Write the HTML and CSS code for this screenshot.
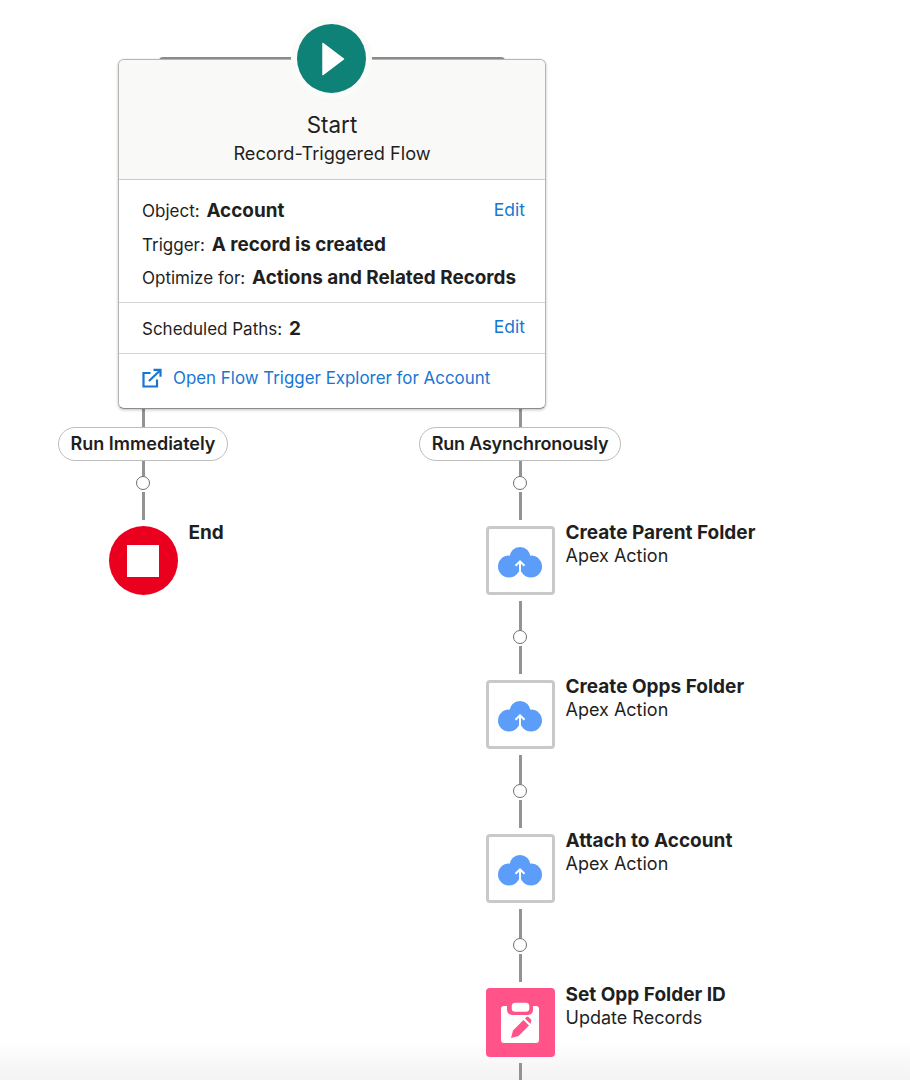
FILE: index.html

```html
<!DOCTYPE html>
<html lang="en">
<head>
    <meta charset="UTF-8">
    <meta name="viewport" content="width=device-width, initial-scale=1.0">
    <title>Record-Triggered Flow</title>
    <link rel="stylesheet" href="styles.css">
</head>
<body>
    <svg class="sprites" width="0" height="0">
        <symbol id="cloud-icon" viewBox="0 0 44 31">
            <circle cx="22" cy="10.5" r="10.5" fill="#5c9dfa"/>
            <circle cx="11" cy="19.5" r="11" fill="#5c9dfa"/>
            <circle cx="33" cy="19.5" r="11" fill="#5c9dfa"/>
            <path d="M22 30V14.5M17.5 18.8L22 14.3l4.5 4.5" fill="none" stroke="#fff" stroke-width="2"/>
        </symbol>
    </svg>

    <div class="canvas">
        <div class="card">
            <div class="top-line"></div>
            <div class="start-icon">
                <svg width="24" height="34" viewBox="0 0 24 34"><path d="M2 1.5L22.5 17 2 32.5z" fill="#fff" stroke="#fff" stroke-width="1.5" stroke-linejoin="round"/></svg>
            </div>
            <div class="card-head">
                <div class="card-title">Start</div>
                <div class="card-sub">Record-Triggered Flow</div>
            </div>
            <div class="card-section props">
                <div class="prop"><span>Object:</span> <b>Account</b><a class="edit">Edit</a></div>
                <div class="prop"><span>Trigger:</span> <b>A record is created</b></div>
                <div class="prop"><span>Optimize for:</span> <b>Actions and Related Records</b></div>
            </div>
            <div class="card-section paths">
                <div class="prop"><span>Scheduled Paths:</span> <b>2</b><a class="edit">Edit</a></div>
            </div>
            <div class="card-section explorer">
                <svg width="20" height="20" viewBox="0 0 20 20" fill="none" stroke="#1776d2" stroke-width="2.2"><path d="M8.5 5H1.5v13.5h13.5V11.5"/><path d="M7 13L18 2.5M11.5 1.8h7v7"/></svg>
                <a>Open Flow Trigger Explorer for Account</a>
            </div>
        </div>

        <div class="branches">
            <div class="branch">
                <div class="line to-pill"></div>
                <div class="pill">Run Immediately</div>
                <div class="line to-dot"></div>
                <div class="dot"></div>
                <div class="line to-node"></div>
                <div class="node">
                    <div class="end-icon"><div class="end-square"></div></div>
                    <div class="node-label"><b>End</b></div>
                </div>
            </div>

            <div class="branch">
                <div class="line to-pill"></div>
                <div class="pill pill-async">Run Asynchronously</div>
                <div class="line to-dot"></div>
                <div class="dot"></div>
                <div class="line to-node"></div>
                <div class="node">
                    <div class="action-icon"><svg width="44" height="31"><use href="#cloud-icon"/></svg></div>
                    <div class="node-label"><b>Create Parent Folder</b><span>Apex Action</span></div>
                </div>
                <div class="line after-node"></div>
                <div class="dot"></div>
                <div class="line to-node"></div>
                <div class="node">
                    <div class="action-icon"><svg width="44" height="31"><use href="#cloud-icon"/></svg></div>
                    <div class="node-label"><b>Create Opps Folder</b><span>Apex Action</span></div>
                </div>
                <div class="line after-node"></div>
                <div class="dot"></div>
                <div class="line to-node"></div>
                <div class="node">
                    <div class="action-icon"><svg width="44" height="31"><use href="#cloud-icon"/></svg></div>
                    <div class="node-label"><b>Attach to Account</b><span>Apex Action</span></div>
                </div>
                <div class="line after-node"></div>
                <div class="dot"></div>
                <div class="line to-node"></div>
                <div class="node">
                    <div class="update-icon">
                        <svg width="69" height="69" viewBox="0 0 69 69">
                            <rect x="15" y="18" width="38" height="37" rx="3" fill="#fff"/>
                            <rect x="21" y="12" width="26" height="15" rx="5" fill="#ff538a"/>
                            <rect x="25.7" y="14.7" width="17.6" height="9" rx="3.5" fill="#fff"/>
                            <path d="M25 50l2-7.5L37.5 32l5.5 5.5L32.5 48z" fill="#ff538a"/>
                            <path d="M39 30.5l1.5-1.5a1.5 1.5 0 0 1 2 0l2.5 2.5a1.5 1.5 0 0 1 0 2L44.5 36z" fill="#ff538a"/>
                        </svg>
                    </div>
                    <div class="node-label"><b>Set Opp Folder ID</b><span>Update Records</span></div>
                </div>
                <div class="line after-node"></div>
            </div>
        </div>
        <div class="bottom-fade"></div>
    </div>
</body>
</html>
```

FILE: styles.css

```css
body {
    margin: 0;
    background-color: #fff;
    font-family: Inter, "Liberation Sans", sans-serif;
    color: #1f1f1f;
}
.sprites {
    position: absolute;
}
.canvas {
    position: relative;
    height: 1080px;
    padding-top: 59px;
    box-sizing: border-box;
    overflow: hidden;
}

/* start card */
.card {
    position: relative;
    box-sizing: border-box;
    width: 428px;
    height: 350px;
    margin-left: 118px;
    background-color: #fff;
    border: 1px solid #b5b5b5;
    border-bottom-color: #8c8c8c;
    border-radius: 6px;
    box-shadow: 0 1px 3px rgba(0, 0, 0, 0.25);
}
.top-line {
    position: absolute;
    z-index: -1;
    top: -3px;
    left: 40px;
    width: 346px;
    height: 6px;
    border-radius: 4px 4px 0 0;
    background-color: #8e8e8e;
}
.start-icon {
    position: absolute;
    top: -36px;
    left: 178px;
    width: 69px;
    height: 69px;
    display: flex;
    align-items: center;
    justify-content: center;
    border-radius: 50%;
    background-color: #0f8278;
    box-shadow: 0 0 0 6px #fbfbfa;
}
.start-icon svg {
    margin-left: 2px;
}
.card-head {
    box-sizing: border-box;
    height: 120px;
    padding-top: 51px;
    text-align: center;
    background-color: #f9f9f8;
    border-bottom: 1px solid #c9c9c9;
    border-radius: 5px 5px 0 0;
}
.card-title {
    font-size: 22.4px;
    line-height: 28px;
}
.card-sub {
    font-size: 18.2px;
    line-height: 28px;
}
.card-section {
    box-sizing: border-box;
    padding: 0 20px 0 23px;
    border-bottom: 1px solid #d4d4d4;
    font-size: 17px;
}
.props {
    height: 123px;
    padding-top: 14px;
}
.paths {
    height: 51px;
    padding-top: 9px;
}
.explorer {
    height: 54px;
    display: flex;
    align-items: center;
    gap: 11px;
    padding-bottom: 6px;
    border-bottom: none;
    font-size: 16.9px;
}
.prop {
    position: relative;
    height: 33.5px;
    line-height: 33.5px;
}
.prop b {
    font-size: 18.9px;
    margin-left: 2px;
}
a {
    color: #1776d2;
}
.edit {
    position: absolute;
    right: 0;
    top: -1px;
    font-size: 17.5px;
}
.paths .edit {
    top: -2px;
}

/* branches */
.branches {
    display: flex;
    gap: 177px;
    margin-left: 43px;
}
.branch {
    display: flex;
    flex-direction: column;
    align-items: center;
    width: 200px;
}
.line {
    width: 3px;
    background-color: #939393;
}
.to-pill {
    height: 18px;
}
.to-dot {
    height: 15px;
}
.to-node {
    height: 28px;
    margin-top: 2px;
}
.after-node {
    height: 29px;
    margin-top: 6px;
}
.pill {
    box-sizing: border-box;
    height: 34px;
    line-height: 32px;
    padding: 0 12px;
    white-space: nowrap;
    font-size: 18px;
    font-weight: 600;
    background-color: #fff;
    border: 1px solid #bdbdbd;
    border-radius: 17px;
}
.pill-async {
    letter-spacing: -0.2px;
}
.dot {
    box-sizing: border-box;
    width: 14px;
    height: 14px;
    border: 1px solid #6f6f6f;
    border-radius: 50%;
    background-color: #fff;
}

/* nodes */
.node {
    position: relative;
    width: 69px;
    height: 69px;
    margin-top: 6px;
}
.node-label {
    position: absolute;
    left: 80px;
    top: -5px;
    white-space: nowrap;
    font-size: 18px;
    line-height: 23px;
}
.node-label b {
    display: block;
    font-size: 19px;
    font-weight: 700;
}
.node-label span {
    display: block;
}
.end-icon {
    display: flex;
    align-items: center;
    justify-content: center;
    height: 100%;
    border-radius: 50%;
    background-color: #ea001e;
}
.end-square {
    width: 32px;
    height: 32px;
    background-color: #fff;
}
.action-icon {
    box-sizing: border-box;
    height: 100%;
    display: flex;
    align-items: center;
    justify-content: center;
    padding-top: 4px;
    border: 3px solid #c9c9c9;
    border-radius: 4px;
    background-color: #fff;
}
.update-icon {
    height: 100%;
    border-radius: 4px;
    background-color: #ff538a;
}
.bottom-fade {
    position: absolute;
    z-index: -1;
    left: 0;
    right: 0;
    bottom: 0;
    height: 40px;
    background: linear-gradient(#fff, #f3f3f3);
}
```
